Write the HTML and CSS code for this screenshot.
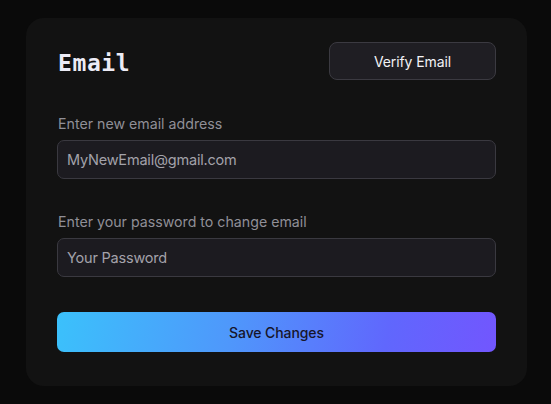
FILE: index.html
```html
<!DOCTYPE html>
<html>
<head>
<meta charset="utf-8">
<link rel="stylesheet" href="styles.css">
</head>
<body>
<div class="card">
  <div class="header">
    <h2 class="title">Email</h2>
    <button class="btn-verify">Verify Email</button>
  </div>
  <div class="field first">
    <label class="label">Enter new email address</label>
    <div class="input">MyNewEmail@gmail.com</div>
  </div>
  <div class="field">
    <label class="label">Enter your password to change email</label>
    <div class="input">Your Password</div>
  </div>
  <button class="btn-save">Save Changes</button>
</div>
</body>
</html>
```
FILE: styles.css
```css
* { box-sizing: border-box; }
html, body { margin: 0; padding: 0; }
body {
  background: #0a0a0a;
  width: 551px;
  height: 404px;
  padding: 18px 24px 0 26px;
  font-family: Inter, "Noto Sans", sans-serif;
}
.card {
  width: 501px;
  height: 368px;
  background: #121212;
  border-radius: 18px;
  padding: 24px 31px 0 31px;
  display: flex;
  flex-direction: column;
}
.header {
  display: flex;
  justify-content: space-between;
  align-items: center;
  height: 38px;
}
.title {
  margin: 4px 0 0 1px;
  font-family: "DejaVu Sans Mono", "Liberation Mono", monospace;
  font-weight: bold;
  font-size: 23px;
  color: #ecebf5;
  letter-spacing: 0.6px;
}
.btn-verify {
  width: 167px;
  height: 38px;
  background: #1f1e23;
  border: 1px solid #3b3a41;
  border-radius: 8px;
  color: #f2f2f5;
  font-family: Inter, "Noto Sans", sans-serif;
  font-size: 14px;
  font-weight: 400;
  padding: 0;
  letter-spacing: -0.1px;
}
.field {
  display: flex;
  flex-direction: column;
  gap: 6px;
  margin-top: 33px;
}
.field.first { margin-top: 34px; }
.label {
  font-size: 14.2px;
  line-height: 20px;
  color: #908f97;
  padding-left: 1px;
  letter-spacing: 0;
}
.input {
  height: 39px;
  background: #1c1b20;
  border: 1px solid #3a3940;
  border-radius: 7px;
  display: flex;
  align-items: center;
  padding-left: 9px;
  font-size: 14.5px;
  color: #a3a2aa;
  letter-spacing: -0.2px;
}
.btn-save {
  margin-top: 35px;
  height: 40px;
  width: 100%;
  border: none;
  border-radius: 7px;
  background: linear-gradient(100deg, #3bc1fb 0%, #4f97fb 40%, #6067fd 75%, #7256fe 100%);
  color: #16152a;
  font-family: Inter, "Noto Sans", sans-serif;
  font-size: 14px;
  font-weight: 500;
  letter-spacing: -0.1px;
}
```
